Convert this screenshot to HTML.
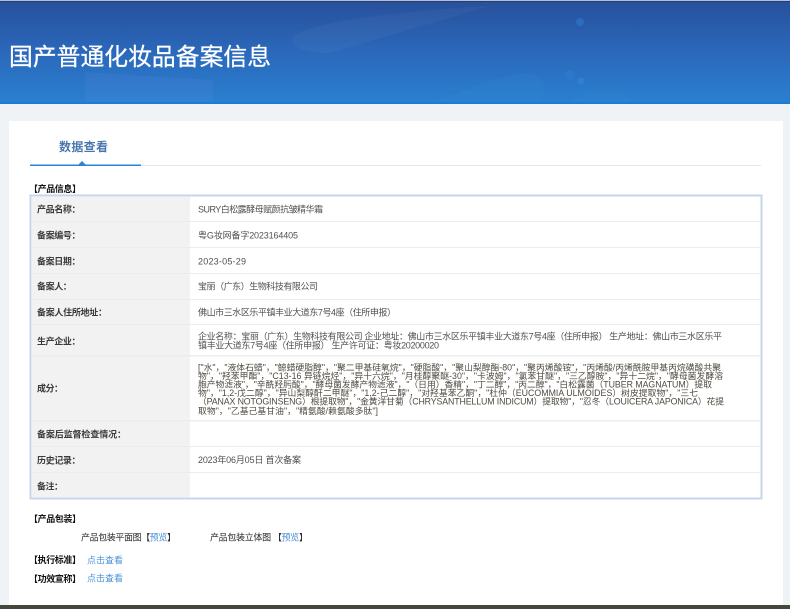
<!DOCTYPE html>
<html lang="zh"><head><meta charset="utf-8"><title>国产普通化妆品备案信息</title>
<style>
html,body{margin:0;padding:0;width:790px;height:609px;overflow:hidden;background:#eff3f6}
svg{display:block}
text{font-family:"Liberation Sans","Noto Sans CJK SC",sans-serif;font-size:9px;fill:#505050;white-space:pre}
.l{font-weight:700;fill:#3a3a3a}
.b{font-weight:700;fill:#111}
.k{fill:#2a2a2a}
.a{fill:#4a90d9}
.g{fill:#4f4a40;font-size:8.800px}
.s{filter:blur(.25px)}
</style></head><body>
<svg width="790" height="609" viewBox="0 0 790 609" xmlns="http://www.w3.org/2000/svg">
<defs><linearGradient id="h" x1="0" y1="0" x2="0" y2="1"><stop offset="0" stop-color="#27509a"/><stop offset=".5" stop-color="#2b68bb"/><stop offset="1" stop-color="#2a80d0"/></linearGradient></defs>
<rect width="790" height="609" fill="#eff3f6"/>
<rect width="790" height="104" fill="url(#h)"/>
<rect width="790" height="1" fill="#b8c0cc"/>
<rect y="1" width="790" height="1" fill="#1f3f80"/>
<path d="M292 38C300 25 380 12 490 6L330 53C305 54 290 46 292 38Z" fill="#fff" opacity=".035"/>
<path d="M85 72L213 80V103H85Z" fill="#6a8fe0" opacity=".14"/>
<path d="M430 103C480 85 510 72 530 74C550 78 545 95 540 103Z" fill="#3d9ad8" opacity=".12"/>
<path d="M570 103C590 85 620 85 635 103Z" fill="#3d9ad8" opacity=".1"/>
<circle cx="580" cy="22" r="4" fill="#2f78d0" opacity=".6"/>
<circle cx="570" cy="75" r="5" fill="#2f7ed4" opacity=".5"/>
<circle cx="581" cy="81" r="3.500" fill="#2f84dc" opacity=".7"/>
<rect y="102" width="790" height="2" fill="#1c7ad8"/>
<text x="9" y="65" textLength="262" stroke="#fff" stroke-width=".25" style="font-size:23.800px;fill:#fff">国产普通化妆品备案信息</text>

<rect x="9" y="121" width="774" height="484" fill="#fff"/>
<text x="59" y="151" textLength="49" style="font-size:12px;fill:#2a5fa0;font-weight:700" opacity=".85">数据查看</text>
<rect x="30" y="165" width="731" height="1" fill="#e6e6e6"/>
<rect x="30" y="164.500" width="111" height="1.500" fill="#2a86d4"/>
<path d="M78 165L82 161L86 165Z" fill="#2a86d4"/>

<rect x="30.500" y="195.500" width="731" height="303" fill="#fff" stroke="#c5d6ea" stroke-width="2"/>
<rect x="32" y="197" width="158" height="300" fill="#f2f2f2"/>
<g fill="#ececec">
<rect x="32" y="221" width="728" height="1"/><rect x="32" y="247" width="728" height="1"/>
<rect x="32" y="273" width="728" height="1"/><rect x="32" y="299" width="728" height="1"/>
<rect x="32" y="324" width="728" height="1"/><rect x="32" y="355" width="728" height="1.500"/>
<rect x="32" y="420" width="728" height="1.500"/><rect x="32" y="446" width="728" height="1"/>
<rect x="32" y="472" width="728" height="1"/>
</g>

<g class="s">
<text class="b" x="29" y="192" textLength="52">【产品信息】</text>
<text class="l" x="37" y="212.500" textLength="43.500">产品名称：</text>
<text class="l" x="37" y="238.500" textLength="43.500">备案编号：</text>
<text class="l" x="37" y="264.500" textLength="43.500">备案日期：</text>
<text class="l" x="37" y="289.500" textLength="34.800">备案人：</text>
<text class="l" x="37" y="315.500" textLength="70">备案人住所地址：</text>
<text class="l" x="37" y="344.500" textLength="43.500">生产企业：</text>
<text class="l" x="37" y="391.500" textLength="26">成分：</text>
<text class="l" x="37" y="437.500" textLength="89">备案后监督检查情况：</text>
<text class="l" x="37" y="463.500" textLength="43.500">历史记录：</text>
<text class="l" x="37" y="489.500" textLength="26">备注：</text>

<text x="198" y="212.500" textLength="125">SURY白松露酵母赋颜抗皱精华霜</text>
<text x="198" y="238.500" textLength="100">粤G妆网备字2023164405</text>
<text x="198" y="264.500" textLength="48">2023-05-29</text>
<text x="198" y="289.500" textLength="120">宝丽（广东）生物科技有限公司</text>
<text x="198" y="315.500" textLength="198">佛山市三水区乐平镇丰业大道东7号4座（住所申报）</text>
<text x="198" y="339.500" textLength="524">企业名称：宝丽（广东）生物科技有限公司 企业地址：佛山市三水区乐平镇丰业大道东7号4座（住所申报） 生产地址：佛山市三水区乐平</text>
<text x="198" y="348.500" textLength="241">镇丰业大道东7号4座（住所申报） 生产许可证：粤妆20200020</text>

<text class="g" x="198" y="370.500" textLength="523">["水"，"液体石蜡"，"鲸蜡硬脂醇"，"聚二甲基硅氧烷"，"硬脂酸"，"聚山梨醇酯-80"，"聚丙烯酸铵"，"丙烯酸/丙烯酰胺甲基丙烷磺酸共聚</text>
<text class="g" x="198" y="378.800" textLength="525">物"，"羟苯甲酯"，"C13-16 异链烷烃"，"异十六烷"，"月桂醇聚醚-30"，"卡波姆"，"氯苯甘醚"，"三乙醇胺"，"异十二烷"，"酵母菌发酵溶</text>
<text class="g" x="198" y="387.500" textLength="514">胞产物滤液"，"辛酰羟肟酸"，"酵母菌发酵产物滤液"，"（日用）香精"，"丁二醇"，"丙二醇"，"白松露菌（TUBER MAGNATUM）提取</text>
<text class="g" x="198" y="395.800" textLength="500">物"，"1,2-戊二醇"，"异山梨醇酐二甲醚"，"1,2-己二醇"，"对羟基苯乙酮"，"杜仲（EUCOMMIA ULMOIDES）树皮提取物"，"三七</text>
<text class="g" x="198" y="404.500" textLength="526">（PANAX NOTOGINSENG）根提取物"，"金黄洋甘菊（CHRYSANTHELLUM INDICUM）提取物"，"忍冬（LOUICERA JAPONICA）花提</text>
<text class="g" x="198" y="414" textLength="180">取物"，"乙基己基甘油"，"精氨酸/赖氨酸多肽"]</text>

<text x="198" y="463" textLength="103">2023年06月05日 首次备案</text>

<text class="b" x="29" y="522" textLength="52">【产品包装】</text>
<text class="k" x="81" y="540.500" textLength="95">产品包装平面图【<tspan class="a">预览</tspan>】</text>
<text class="k" x="210" y="540.500" textLength="98">产品包装立体图 【<tspan class="a">预览</tspan>】</text>
<text class="b" x="29" y="563" textLength="52">【执行标准】</text>
<text class="a" x="87" y="563.500" textLength="36">点击查看</text>
<text class="b" x="29" y="582" textLength="52">【功效宣称】</text>
<text class="a" x="87" y="581.500" textLength="36">点击查看</text>
</g>

<rect y="605" width="790" height="4" fill="#45473a"/>
</svg>
</body></html>
